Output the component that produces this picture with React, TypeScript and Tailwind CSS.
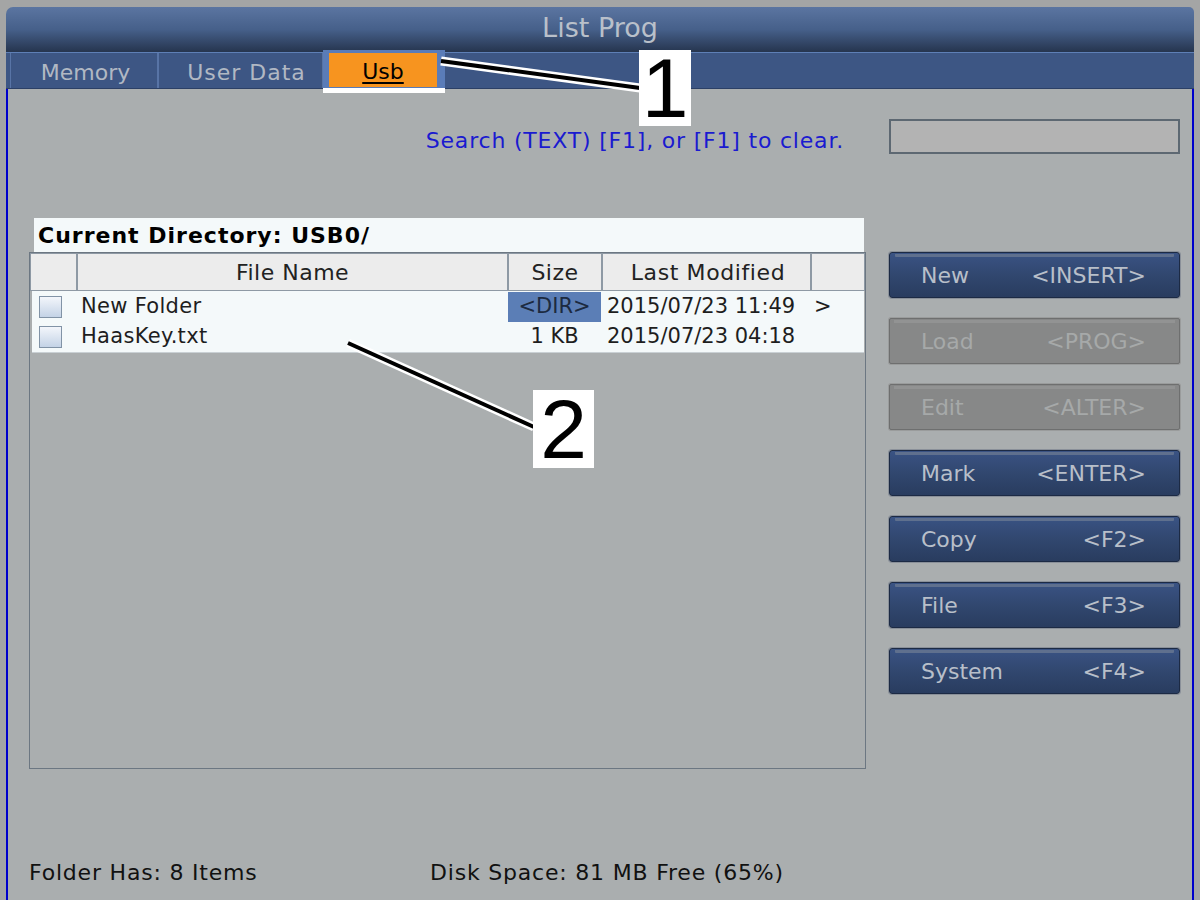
import React from "react";

const blueBtn =
  "h-[46px] rounded-[3px] border border-[#1c2a44] bg-gradient-to-b from-[#3a5384] via-[#31476f] to-[#293c5f] flex flex-col shadow-[0_0_0_1px_#8a9099]";
const grayBtn =
  "h-[46px] rounded-[2px] border border-[#6e6f6f] bg-[#878888] flex flex-col shadow-[0_0_0_1px_#9a9c9c]";

function Btn({ label, keyName, disabled }: { label: string; keyName: string; disabled?: boolean }) {
  return (
    <div className={disabled ? grayBtn : blueBtn}>
      <div className={disabled ? "mx-[4px] mt-[1px] h-[3px] bg-[#929393]" : "mx-[5px] mt-[1px] h-[3px] rounded-b-[1px] bg-[#5f708e]"} />
      <div
        className={
          "flex-1 flex items-center justify-between pl-[31px] pr-[33px] pb-[3px] text-[22px] " +
          (disabled ? "text-[#a6a9a9]" : "text-[#b8bfc9]")
        }
      >
        <span>{label}</span>
        <span>{keyName}</span>
      </div>
    </div>
  );
}

function Check() {
  return (
    <div className="w-[23px] h-[22px] border border-[#8193a6] bg-gradient-to-b from-[#f3f6fb] to-[#c4d3e6]" />
  );
}

export default function App() {
  return (
    <div className="relative w-[1200px] h-[900px] overflow-hidden bg-[#a4a5a5] font-['DejaVu_Sans',sans-serif]">
      <div className="ml-[6px] mt-[7px] w-[1188px] flex flex-col">
        {/* Title bar */}
        <div className="h-[45px] rounded-tl-[7px] rounded-tr-[5px] bg-gradient-to-b from-[#5b75a1] via-[#46608a] to-[#26354f] flex items-center justify-center">
          <span className="text-[27px] text-[#b9c0ca] pb-[2px]">List Prog</span>
        </div>
        {/* Tab bar */}
        <div className="relative z-10 h-[37px] border-t border-t-[#5e7fb6] border-b border-b-[#2c4066] bg-[#3d5684] flex items-start pl-[4px]">
          <div className="w-[148px] h-[35px] border-x border-[#5874a6] flex items-center justify-center text-[22px] text-[#b1b8c3] pt-[3px] pl-[3px]">
            Memory
          </div>
          <div className="w-[165px] h-[35px] border-x border-[#5874a6] flex items-center justify-center text-[22px] text-[#b1b8c3] tracking-[1px] pt-[3px] pl-[12px]">
            User Data
          </div>
          <div className="w-[122px] h-[43px] -mt-[3px] bg-[#5a7cb8] flex flex-col">
            <div className="pl-[6px] pr-[8px] pt-[3px]">
              <div className="h-[34px] bg-[#f7941f] flex items-center justify-center text-[22px] text-black underline underline-offset-[3px] pt-[3px]">
                Usb
              </div>
            </div>
            <div className="mt-[1px] h-[5px] bg-white" />
          </div>
        </div>
        {/* Content */}
        <div className="h-[812px] border-l-2 border-r-2 border-[#0000cc] bg-[#aaaeaf] flex flex-col">
          {/* search row */}
          <div className="mt-[30px] h-[35px] flex pl-[21px]">
            <div className="w-[837px] flex items-end justify-end pr-[22px] text-[22px] tracking-[0.8px] text-[#1a1ad0] leading-[26px]">
              Search (TEXT) [F1], or [F1] to clear.
            </div>
            <div className="ml-[23px] w-[291px] h-[35px] border-2 border-[#5d6872] bg-[#b3b3b3]" />
          </div>
          {/* main row */}
          <div className="mt-[64px] flex pl-[21px]">
            <div className="w-[837px] flex flex-col">
              <div className="ml-[5px] w-[830px] h-[34px] bg-[#f4f9fa] flex items-center pl-[4px] font-bold text-[22px] text-black tracking-[1px]">
                Current Directory: USB0/
              </div>
              <div className="h-[517px] border border-[#6c7782] flex flex-col">
                {/* header */}
                <div className="h-[38px] flex bg-[#f4f9fa] text-[22px] text-[#222]">
                  <div className="w-[47px] border border-[#8e99a4] bg-[#ececec]" />
                  <div className="w-[431px] border border-[#8e99a4] bg-[#ececec] flex items-center justify-center tracking-[0.5px]">File Name</div>
                  <div className="w-[94px] border border-[#8e99a4] bg-[#ececec] flex items-center justify-center tracking-[0.5px]">Size</div>
                  <div className="w-[209px] border border-[#8e99a4] bg-[#ececec] flex items-center justify-center tracking-[0.6px] pl-[3px]">Last Modified</div>
                  <div className="flex-1 border border-[#8e99a4] bg-[#ececec]" />
                </div>
                {/* rows */}
                <div className="ml-[2px] w-[832px] bg-[#f4f9fa] border-b border-[#c9d0d4] pt-[1px] text-[21px] text-[#1e1e1e]">
                  {[
                    { name: "New Folder", size: "<DIR>", date: "2015/07/23 11:49", more: ">", dir: true },
                    { name: "HaasKey.txt", size: "1 KB", date: "2015/07/23 04:18", more: "", dir: false },
                  ].map((r) => (
                    <div key={r.name} className="h-[30px] flex items-center">
                      <div className="w-[45px] pl-[7px] flex items-center">
                        <Check />
                      </div>
                      <div className="w-[431px] pl-[4px] tracking-[0.3px]">{r.name}</div>
                      <div
                        className={
                          "w-[93px] h-[30px] flex items-center justify-center " +
                          (r.dir ? "bg-[#5b7eb6] text-[#1c2a40]" : "")
                        }
                      >
                        {r.size}
                      </div>
                      <div className="w-[208px] pl-[6px]">{r.date}</div>
                      <div className="flex-1 pl-[5px]">{r.more}</div>
                    </div>
                  ))}
                </div>
              </div>
            </div>
            <div className="ml-[23px] mt-[34px] w-[291px] flex flex-col gap-[20px]">
              <Btn label="New" keyName="<INSERT>" />
              <Btn label="Load" keyName="<PROG>" disabled />
              <Btn label="Edit" keyName="<ALTER>" disabled />
              <Btn label="Mark" keyName="<ENTER>" />
              <Btn label="Copy" keyName="<F2>" />
              <Btn label="File" keyName="<F3>" />
              <Btn label="System" keyName="<F4>" />
            </div>
          </div>
          {/* footer */}
          <div className="mt-[90px] h-[26px] flex items-center pl-[21px] text-[22px] text-[#111] tracking-[0.8px]">
            <span className="w-[401px]">Folder Has: 8 Items</span>
            <span>Disk Space: 81 MB Free (65%)</span>
          </div>
        </div>
      </div>

      {/* annotations */}
      <svg className="absolute inset-0 z-20 pointer-events-none" width="1200" height="900">
        <line x1="441" y1="61" x2="640" y2="88" stroke="white" strokeWidth="9" />
        <line x1="441" y1="61" x2="640" y2="88" stroke="black" strokeWidth="4" />
        <line x1="348" y1="343" x2="534" y2="427" stroke="white" strokeWidth="9" />
        <line x1="348" y1="343" x2="534" y2="427" stroke="black" strokeWidth="4" />
      </svg>
      <div className="absolute z-20 left-[639px] top-[50px] w-[52px] h-[76px] bg-white flex items-center justify-center font-['Liberation_Sans',sans-serif] text-[84px] leading-none text-black">
        1
      </div>
      <div className="absolute z-20 left-[533px] top-[390px] w-[61px] h-[78px] bg-white flex items-center justify-center font-['Liberation_Sans',sans-serif] text-[84px] leading-none text-black">
        2
      </div>
    </div>
  );
}
